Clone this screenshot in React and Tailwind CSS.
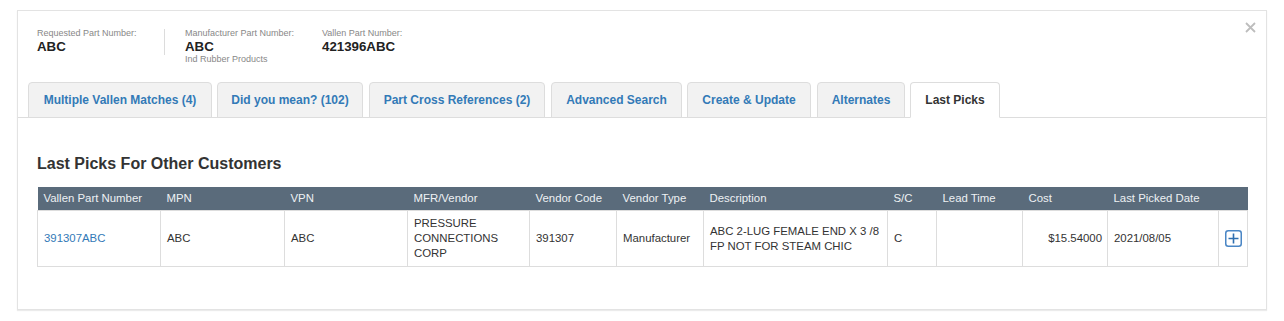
const tabs = [
  { label: 'Multiple Vallen Matches (4)', cls: 'w-[184px]' },
  { label: 'Did you mean? (102)', cls: 'w-[146px] ml-[5px]' },
  { label: 'Part Cross References (2)', cls: 'w-[176px] ml-[6px]' },
  { label: 'Advanced Search', cls: 'w-[131px] ml-[6px]' },
  { label: 'Create & Update', cls: 'w-[124px] ml-[5px]' },
  { label: 'Alternates', cls: 'w-[88px] ml-[6px]' },
  { label: 'Last Picks', cls: 'w-[90px] ml-[5px]', active: true },
];

const columns = [
  { label: 'Vallen Part Number', w: 'w-[123px]' },
  { label: 'MPN', w: 'w-[124px]' },
  { label: 'VPN', w: 'w-[123px]' },
  { label: 'MFR/Vendor', w: 'w-[122px]' },
  { label: 'Vendor Code', w: 'w-[87px]' },
  { label: 'Vendor Type', w: 'w-[87px]' },
  { label: 'Description', w: 'w-[184px]' },
  { label: 'S/C', w: 'w-[49px]' },
  { label: 'Lead Time', w: 'w-[86px]' },
  { label: 'Cost', w: 'w-[85px]' },
  { label: 'Last Picked Date', w: 'w-[111px]' },
  { label: '', w: 'w-[29px]' },
];

function PlusIcon() {
  return (
    <svg width="17" height="17" viewBox="0 0 17 17" className="block mx-auto">
      <rect x="0.75" y="0.75" width="15.5" height="15.5" rx="2.5" fill="none" stroke="#4a86c5" strokeWidth="1.5" />
      <path d="M8.5 3.5v10M3.5 8.5h10" stroke="#2f6fb0" strokeWidth="1.6" />
    </svg>
  );
}

export default function App() {
  return (
    <div className="h-[321px] bg-white pt-[10px] px-[17px] font-['Liberation_Sans',Arial,sans-serif] text-[#333]">
      <div className="relative h-[300px] border border-[#e3e3e3] shadow-[0_1px_1px_rgba(0,0,0,0.08)] bg-white">
        <button className="absolute right-[10px] top-[11px] p-0">
          <svg width="11" height="11" viewBox="0 0 11 11">
            <path d="M1 1l9 9M10 1l-9 9" stroke="#bdbdbd" strokeWidth="1.8" />
          </svg>
        </button>

        {/* part header */}
        <div className="flex pt-[16px] pl-[19px]">
          <div className="w-[128px] border-r border-[#dcdcdc] h-[26px] mt-[2px]">
            <div className="-mt-[2px] text-[9px] leading-[12px] text-[#888]">Requested Part Number:</div>
            <div className="mt-[1px] text-[13.3px] leading-[14px] font-bold text-[#222]">ABC</div>
          </div>
          <div className="w-[137px] pl-[20px] box-content">
            <div className="text-[9px] leading-[12px] text-[#888]">Manufacturer Part Number:</div>
            <div className="mt-[1px] text-[13.3px] leading-[14px] font-bold text-[#222]">ABC</div>
            <div className="text-[9px] leading-[10px] text-[#888]">Ind Rubber Products</div>
          </div>
          <div>
            <div className="text-[9px] leading-[12px] text-[#888]">Vallen Part Number:</div>
            <div className="mt-[1px] text-[13.3px] leading-[14px] font-bold text-[#222]">421396ABC</div>
          </div>
        </div>

        {/* tabs */}
        <div className="mt-[18px] flex pl-[10px] border-b border-[#dddddd]">
          {tabs.map((t) => (
            <div
              key={t.label}
              className={
                t.cls +
                ' h-[36px] -mb-px flex items-center justify-center rounded-t-[4px] border text-[12px] font-bold ' +
                (t.active
                  ? 'bg-white border-[#dddddd] border-b-white text-[#333]'
                  : 'bg-[#f2f2f2] border-[#dddddd] text-[#337ab7]')
              }
            >
              {t.label}
            </div>
          ))}
        </div>

        {/* content */}
        <div className="px-[19px]">
          <h3 className="mt-[36px] text-[16px] leading-[20px] font-bold text-[#333]">Last Picks For Other Customers</h3>
          <table className="mt-[13px] w-[1210px] table-fixed border-collapse text-[11.4px] leading-[15px]">
            <thead>
              <tr className="bg-[#5a6b7b] text-[#eef1f4]">
                {columns.map((c, i) => (
                  <th key={i} className={c.w + ' py-[4px] px-[6px] text-left font-normal'}>
                    {c.label}
                  </th>
                ))}
              </tr>
            </thead>
            <tbody>
              <tr className="text-[#333]">
                <td className="border border-[#dddddd] py-[5px] px-[6px] text-[#337ab7]">391307ABC</td>
                <td className="border border-[#dddddd] py-[5px] px-[6px]">ABC</td>
                <td className="border border-[#dddddd] py-[5px] px-[6px]">ABC</td>
                <td className="border border-[#dddddd] py-[5px] px-[6px]">PRESSURE CONNECTIONS CORP</td>
                <td className="border border-[#dddddd] py-[5px] px-[6px]">391307</td>
                <td className="border border-[#dddddd] py-[5px] px-[6px]">Manufacturer</td>
                <td className="border border-[#dddddd] py-[5px] px-[6px]">ABC 2-LUG FEMALE END X 3 /8 FP NOT FOR STEAM CHIC</td>
                <td className="border border-[#dddddd] py-[5px] px-[6px]">C</td>
                <td className="border border-[#dddddd] py-[5px] px-[6px]"></td>
                <td className="border border-[#dddddd] py-[5px] pl-[6px] pr-[5px] text-right">$15.54000</td>
                <td className="border border-[#dddddd] py-[5px] px-[6px]">2021/08/05</td>
                <td className="border border-[#dddddd] py-[5px] px-[2px]">
                  <PlusIcon />
                </td>
              </tr>
            </tbody>
          </table>
        </div>
      </div>
    </div>
  );
}
